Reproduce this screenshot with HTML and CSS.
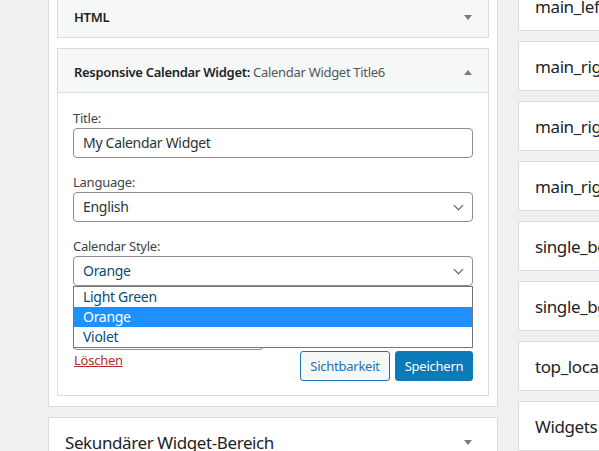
FILE: index.html
```html
<!DOCTYPE html>
<html lang="de">
<head>
<meta charset="utf-8">
<title>Widgets</title>
<link rel="stylesheet" href="styles.css">
</head>
<body>
<div class="page">
  <div class="left-col">
    <div class="sidebar">
      <div class="widget">
        <div class="widget-top">
          <span class="widget-title"><b>HTML</b></span>
          <span class="arrow down"></span>
        </div>
      </div>
      <div class="widget open">
        <div class="widget-top">
          <span class="widget-title"><b>Responsive Calendar Widget:</b> <span class="in-title">Calendar Widget Title6</span></span>
          <span class="arrow up"></span>
        </div>
        <div class="widget-inside">
          <div class="field">
            <label>Title:</label>
            <div class="input">My Calendar Widget</div>
          </div>
          <div class="field">
            <label>Language:</label>
            <div class="select">English<span class="chev"></span></div>
          </div>
          <div class="field">
            <label>Calendar Style:</label>
            <div class="select-wrap">
              <div class="select focused">Orange<span class="chev"></span></div>
              <div class="dropdown">
                <div class="opt">Light Green</div>
                <div class="opt selected">Orange</div>
                <div class="opt">Violet</div>
              </div>
            </div>
          </div>
          <div class="field hidden-field">
            <label></label>
            <div class="input short"></div>
          </div>
          <div class="actions">
            <a class="delete">Löschen</a>
            <div class="buttons">
              <button class="btn secondary">Sichtbarkeit</button>
              <button class="btn primary">Speichern</button>
            </div>
          </div>
        </div>
      </div>
    </div>
    <div class="area">
      <span class="area-title">Sekundärer Widget-Bereich</span>
      <span class="arrow down"></span>
    </div>
  </div>
  <div class="right-col">
    <div class="rbox">main_lef</div>
    <div class="rbox">main_rig</div>
    <div class="rbox">main_rig</div>
    <div class="rbox">main_rig</div>
    <div class="rbox">single_bg</div>
    <div class="rbox">single_bg</div>
    <div class="rbox">top_loca</div>
    <div class="rbox">Widgets</div>
  </div>
</div>
</body>
</html>
```

FILE: styles.css
```css
* { box-sizing: border-box; }
html, body {
  margin: 0;
  padding: 0;
  background: #f0f0f1;
  overflow: hidden;
  width: 599px;
  height: 451px;
}
body {
  font-family: "Noto Sans", "Liberation Sans", sans-serif;
  font-size: 13px;
  letter-spacing: -0.25px;
  color: #1d2327;
}
.page {
  display: flex;
  gap: 20px;
  padding-left: 48px;
}
.left-col {
  width: 450px;
  flex: none;
  display: flex;
  flex-direction: column;
  gap: 10px;
  margin-top: -20px;
}
.sidebar {
  background: #fff;
  border: 1px solid #dcdcde;
  padding: 12px 8px 10px;
  display: flex;
  flex-direction: column;
  gap: 10px;
}
.widget {
  border: 1px solid #dcdcde;
  background: #f6f7f7;
}
.widget-top {
  height: 43px;
  display: flex;
  align-items: center;
  justify-content: space-between;
  padding: 3px 16px 0 16px;
}
.widget-title { letter-spacing: -0.3px; }
.widget-title b { font-weight: 600; color: #1d2327; }
.in-title { color: #50575e; font-weight: 400; }
.arrow {
  width: 0;
  height: 0;
  border-left: 4px solid transparent;
  border-right: 4px solid transparent;
}
.arrow.down { border-top: 5px solid #787c82; }
.arrow.up { border-bottom: 5px solid #787c82; }
.widget-inside {
  border-top: 1px solid #dcdcde;
  background: #fff;
  padding: 16px 15px 14px;
}
.field { margin-bottom: 15px; }
.field label {
  display: block;
  height: 18px;
  line-height: 18px;
  margin-bottom: 1px;
  color: #3c434a;
}
.input, .select {
  height: 30px;
  border: 1px solid #8c8f94;
  border-radius: 4px;
  padding: 0 9px;
  line-height: 28px;
  color: #2c3338;
  background: #fff;
  font-size: 14px;
  letter-spacing: -0.3px;
}
.select {
  position: relative;
  display: flex;
  align-items: center;
  justify-content: space-between;
  padding-right: 10px;
}
.select.focused { color: #0a4b78; }
.chev {
  width: 7px;
  height: 7px;
  border-right: 1.5px solid #50575e;
  border-bottom: 1.5px solid #50575e;
  transform: rotate(45deg);
  margin-top: -4px;
}
.select-wrap { position: relative; z-index: 2; }
.dropdown {
  position: absolute;
  top: 100%;
  left: 0;
  right: 0;
  background: #fff;
  border: 1px solid #767676;
  font-size: 14px;
  letter-spacing: -0.3px;
}
.opt {
  height: 20px;
  line-height: 20px;
  padding-left: 9px;
  color: #0a4b78;
}
.opt.selected { background: #1e90ff; color: #fff; }
.input.short { width: 191px; }
.hidden-field { margin-bottom: 1px; }
.actions {
  display: flex;
  justify-content: space-between;
  align-items: flex-start;
}
.delete {
  color: #b32d2e;
  text-decoration: underline;
  line-height: 18px;
  padding-left: 1px;
}
.buttons { display: flex; gap: 5px; }
.btn {
  font-family: inherit;
  font-size: 13px;
  letter-spacing: -0.25px;
  height: 30px;
  border-radius: 3px;
  padding: 0;
  line-height: 28px;
  text-align: center;
}
.btn.secondary {
  width: 90px;
  background: #f6f7f7;
  border: 1px solid #2271b1;
  color: #2271b1;
}
.btn.primary {
  width: 78px;
  background: #0a7bb8;
  border: 1px solid #0a7bb8;
  color: #fff;
}
.area {
  background: #fff;
  border: 1px solid #dcdcde;
  height: 60px;
  display: flex;
  justify-content: space-between;
  align-items: flex-start;
  padding: 13px 25px 0 16px;
}
.area-title { font-size: 17px; letter-spacing: -0.4px; color: #1d2327; }
.area .arrow { margin-top: 9px; }
.right-col {
  display: flex;
  flex-direction: column;
  gap: 10px;
  margin-top: -19px;
  width: 100px;
  flex: none;
}
.rbox {
  height: 50px;
  background: #fff;
  border: 1px solid #dcdcde;
  border-right: none;
  display: flex;
  align-items: center;
  padding-left: 16px;
  font-size: 17px;
  letter-spacing: -0.4px;
  white-space: nowrap;
  overflow: hidden;
}
```
